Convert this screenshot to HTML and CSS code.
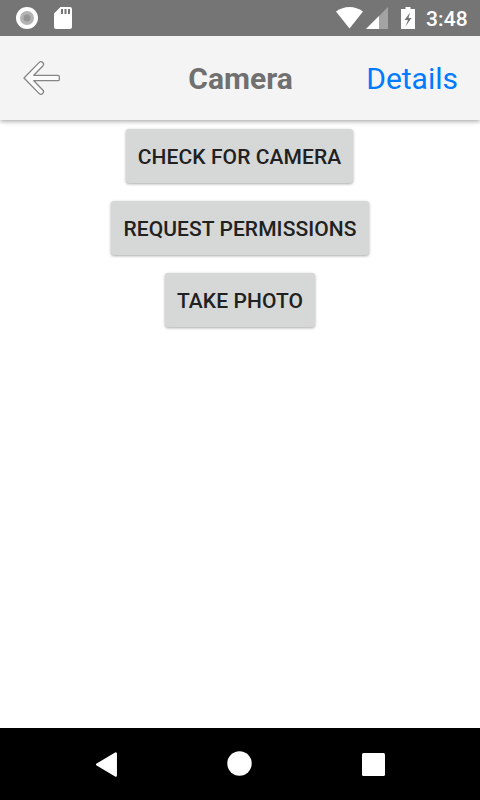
FILE: index.html
```html
<!DOCTYPE html>
<html lang="en">
<head>
<meta charset="utf-8">
<title>Camera</title>
<link rel="stylesheet" href="styles.css">
</head>
<body>
<div class="status">
  <svg class="record" width="22" height="22" viewBox="0 0 22 22"><circle cx="11" cy="11" r="11" fill="#fff"/><circle cx="11" cy="11" r="7" fill="#b3b3b3"/><circle cx="11" cy="11" r="3.500" fill="#949494"/></svg>
  <svg class="card" width="18" height="22" viewBox="0 0 18 22"><path fill="#fff" fill-rule="evenodd" d="M6.500 0H16a2 2 0 0 1 2 2v18a2 2 0 0 1-2 2H2a2 2 0 0 1-2-2V6.500zM7 2v5h2V2zM10.500 2v5h2V2zM14 2v5h2V2z"/></svg>
  <svg class="wifi" width="27" height="22" viewBox="0 0 27 22"><path fill="#fff" d="M0 4.500C8-1.500 19-1.500 27 4.500L13.500 21.500z"/></svg>
  <svg class="signal" width="22" height="22" viewBox="0 0 22 22"><path fill="#a3a3a3" d="M22 0v22H0z"/><path fill="#fff" d="M13 9v13H0z"/></svg>
  <svg class="battery" width="14" height="22" viewBox="0 0 14 22"><path fill="#fff" d="M4.500 0h5v2H14v20H0V2h4.500z"/><path fill="#757575" d="M9 5.500L3.500 13H7l-2.500 6.500L10.500 11H7.500z"/></svg>
  <span class="clock">3:48</span>
</div>
<header class="header">
  <svg class="back" width="38" height="36" viewBox="0 0 38 36"><path fill="#fbfbfb" stroke="#858585" stroke-width="1.300" stroke-linejoin="round" d="M1 18L16.200 2.400Q18 .8 19.700 2.500Q21.400 4.200 19.800 6L10.800 15.300H35Q36.300 15.300 36.300 16.500V19.500Q36.300 20.700 35 20.700H10.800L19.800 30Q21.400 31.800 19.700 33.500Q18 35.200 16.200 33.600Z"/></svg>
  <h1 class="title">Camera</h1>
  <a class="details">Details</a>
</header>
<main class="content">
  <button class="button check">CHECK FOR CAMERA</button>
  <button class="button request">REQUEST PERMISSIONS</button>
  <button class="button take">TAKE PHOTO</button>
</main>
<nav class="nav">
  <svg width="22" height="25" viewBox="0 0 22 25"><path fill="#fff" stroke="#fff" stroke-width="2.500" stroke-linejoin="round" d="M1.300 12.500L19.700 1.600v21.800z"/></svg>
  <svg class="home" width="25" height="25" viewBox="0 0 25 25"><circle cx="12.500" cy="12.500" r="12.200" fill="#fff"/></svg>
  <svg width="23" height="23" viewBox="0 0 23 23"><rect width="23" height="23" rx="1.500" fill="#fff"/></svg>
</nav>
</body>
</html>
```
FILE: styles.css
```css
* { box-sizing: border-box; }
body {
  margin: 0;
  height: 800px;
  display: flex;
  flex-direction: column;
  background: #fff;
  font-family: Roboto, sans-serif;
  overflow: hidden;
}
svg { display: block; flex: none; }
.status {
  position: relative;
  z-index: 1;
  height: 36px;
  flex: none;
  display: flex;
  align-items: center;
  padding: 0 12px 0 16px;
  background: #757575;
  color: #fff;
}
.card { margin-left: 16px; }
.wifi { margin-left: auto; }
.signal { margin-left: 3px; }
.battery { margin: -1px 0 0 13px; }
.clock {
  width: 42px;
  margin: 1px 0 0 11px;
  font-size: 21px;
  font-weight: 500;
  line-height: 24px;
  letter-spacing: .1px;
  white-space: nowrap;
}
.header {
  height: 84px;
  flex: none;
  display: grid;
  grid-template-columns: 1fr auto 1fr;
  align-items: center;
  padding: 0 22px 0 23px;
  background: #f4f4f4;
  box-shadow: 0 1px 5px rgba(0, 0, 0, .4);
}
.title {
  margin: 2px 0 0;
  font-size: 30px;
  line-height: 36px;
  font-weight: 700;
  color: #707070;
}
.details {
  justify-self: end;
  margin-top: 2px;
  font-size: 30px;
  line-height: 36px;
  color: #007aff;
}
.content {
  flex: 1;
  display: flex;
  flex-direction: column;
  align-items: center;
  gap: 18px;
  padding-top: 9px;
}
.button {
  height: 54px;
  border: 0;
  padding: 2px 0 0;
  border-radius: 3px;
  background: #d6d7d7;
  box-shadow: 0 1px 3px rgba(0, 0, 0, .35);
  color: #212121;
  font: 500 21px/24px Roboto, sans-serif;
  letter-spacing: .08px;
  white-space: nowrap;
}
.check { width: 227px; margin-right: 1px; }
.request { width: 258px; }
.take { width: 150px; }
.nav {
  height: 72px;
  flex: none;
  display: flex;
  align-items: center;
  justify-content: space-between;
  padding: 1px 95px 0 96px;
  background: #000;
}
.home { margin: -2px 2px 0 0; }
```
